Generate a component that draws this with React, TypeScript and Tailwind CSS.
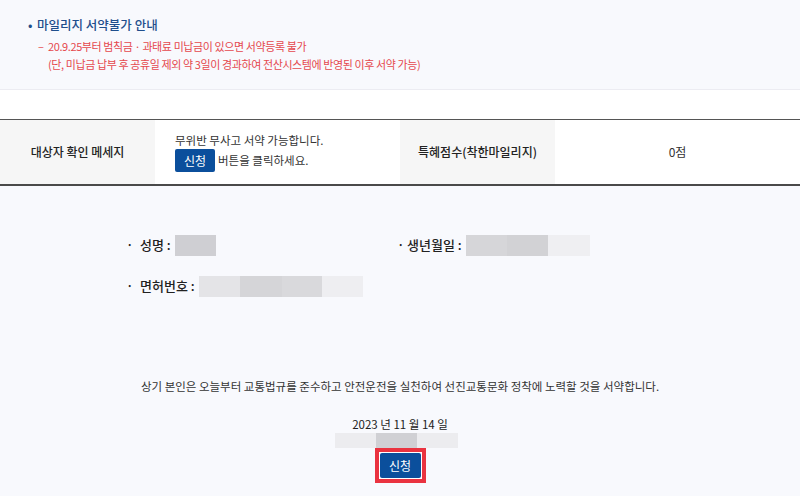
const font = { fontFamily: '"Noto Sans CJK KR", "Noto Sans", sans-serif' };

function Blur({ parts, h }: { parts: [number, string][]; h: string }) {
  return (
    <div className={`flex ${h}`}>
      {parts.map(([w, c], i) => (
        <div key={i} style={{ width: w, backgroundColor: c }} />
      ))}
    </div>
  );
}

function ApplyButton({ big }: { big?: boolean }) {
  return (
    <button
      className={`bg-[#0b4f9c] text-white rounded-[2px] flex items-center justify-center ${
        big ? "w-[41px] h-[25px] text-[12px]" : "w-[40px] h-[23px] text-[12px]"
      }`}
    >
      신청
    </button>
  );
}

export default function App() {
  return (
    <div style={font} className="w-[800px] h-[496px] overflow-hidden bg-white text-[#333]">
      {/* 안내 영역 */}
      <div className="h-[90px] bg-[#f8f9fd] border-b border-[#ececf2] pt-[16px] pl-[28px]">
        <p className="text-[12.5px] leading-[18px] text-[#1f4e8c] font-medium flex">
          <span className="w-[9px]">•</span>
          <span>마일리지 서약불가 안내</span>
        </p>
        <div className="mt-[3px] pl-[10px] text-[11px] leading-[18px] tracking-[-0.4px] text-[#e5484d]">
          <p className="flex">
            <span className="w-[10px]">–</span>
            <span>20.9.25부터 범칙금 · 과태료 미납금이 있으면 서약등록 불가</span>
          </p>
          <p className="pl-[10px]">(단, 미납금 납부 후 공휴일 제외 약 3일이 경과하여 전산시스템에 반영된 이후 서약 가능)</p>
        </div>
      </div>

      {/* 확인 테이블 */}
      <div className="h-[29px]" />
      <div className="flex h-[67px] border-t border-[#555] border-b-2 border-b-[#4a4a4a] text-[12px]">
        <div className="w-[155px] bg-[#f6f6f6] flex items-center justify-center font-medium text-[#222]">
          대상자 확인 메세지
        </div>
        <div className="w-[245px] flex flex-col justify-center pl-[20px] gap-[1px] text-[11.5px]">
          <p className="leading-[16px]">무위반 무사고 서약 가능합니다.</p>
          <div className="flex items-center gap-[3px]">
            <ApplyButton />
            <span>버튼을 클릭하세요.</span>
          </div>
        </div>
        <div className="w-[155px] bg-[#f6f6f6] flex items-center justify-center font-medium text-[#222]">
          특혜점수(착한마일리지)
        </div>
        <div className="flex-1 flex items-center justify-center">0점</div>
      </div>

      {/* 서약 영역 */}
      <div className="h-[310px] bg-[#f8f9fd] pt-[48px] flex flex-col">
        <div className="flex pl-[126px] h-[22px] items-center text-[13px] font-medium text-[#222]">
          <div className="w-[271px] flex items-center">
            <span className="w-[14px]">·</span>
            <span>성명 :</span>
            <div className="ml-[4px]">
              <Blur h="h-[21px]" parts={[[41, "#cfcfd3"]]} />
            </div>
          </div>
          <div className="flex items-center">
            <span className="w-[10px]">·</span>
            <span>생년월일 :</span>
            <div className="ml-[4px]">
              <Blur h="h-[21px]" parts={[[41, "#d6d6d9"], [41, "#d2d2d5"], [42, "#efeff2"]]} />
            </div>
          </div>
        </div>
        <div className="flex pl-[126px] h-[22px] items-center mt-[19px] text-[13px] font-medium text-[#222]">
          <span className="w-[14px]">·</span>
          <span>면허번호 :</span>
          <div className="ml-[4px]">
            <Blur h="h-[21px]" parts={[[41, "#e4e4e7"], [42, "#d5d5d8"], [40, "#d9d9dc"], [41, "#eeeef1"]]} />
          </div>
        </div>

        <p className="mt-[80px] text-center text-[11.5px] leading-[18px]">
          상기 본인은 오늘부터 교통법규를 준수하고 안전운전을 실천하여 선진교통문화 정착에 노력할 것을 서약합니다.
        </p>
        <p className="mt-[20px] text-center text-[11.5px] leading-[18px] text-[#222]">2023 년 11 월 14 일</p>
        <div className="flex justify-center pr-[7px]">
          <Blur h="h-[15px]" parts={[[41, "#ececef"], [41, "#d0d0d4"], [41, "#ececef"]]} />
        </div>
        <div className="flex justify-center">
          <div className="border-[4px] border-[#ea3340] p-[1px] bg-white">
            <ApplyButton big />
          </div>
        </div>
      </div>
    </div>
  );
}
